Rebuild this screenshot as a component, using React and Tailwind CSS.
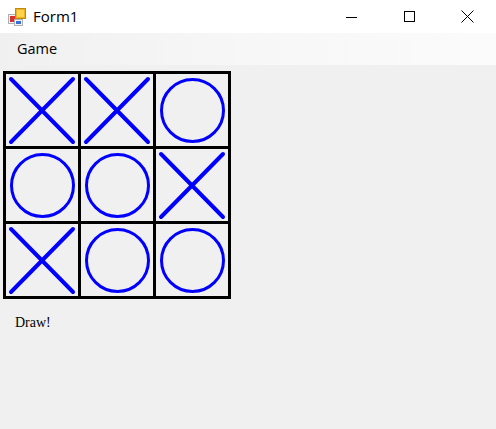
// App.jsx — WinForms-style tic-tac-toe window (draw state)

const board = ['X', 'X', 'O', 'O', 'O', 'X', 'X', 'O', 'O']

function Mark({ v }) {
  if (v === 'X') {
    return (
      <svg width="72" height="72" viewBox="0 0 72 72">
        <line x1="5" y1="5" x2="67" y2="68" stroke="#0000ff" strokeWidth="4" strokeLinecap="round" />
        <line x1="67" y1="5" x2="5" y2="68" stroke="#0000ff" strokeWidth="4" strokeLinecap="round" />
      </svg>
    )
  }
  return (
    <svg width="72" height="72" viewBox="0 0 72 72">
      <circle cx="36.5" cy="36.5" r="31" fill="none" stroke="#0000ff" strokeWidth="3" />
    </svg>
  )
}

function AppIcon() {
  return (
    <svg width="18" height="18" viewBox="0 0 18 18">
      <rect x="0.5" y="6.5" width="8" height="9" fill="#f4f4f4" stroke="#b0b0b0" />
      <rect x="2" y="8" width="5" height="6" fill="#d83030" />
      <rect x="7.5" y="0.5" width="10" height="10" fill="#f0b020" stroke="#c08a10" />
      <rect x="9" y="2" width="7" height="7" fill="#fcd44a" />
      <rect x="6.5" y="11.5" width="8" height="6" fill="#f4f4f4" stroke="#b0b0b0" />
      <rect x="8" y="13" width="5" height="3" fill="#3a6fd8" />
    </svg>
  )
}

export default function App() {
  return (
    <div className="w-[496px] h-[429px] bg-[#f0f0f0] flex flex-col overflow-hidden" style={{ fontFamily: '"Open Sans", "Noto Sans", sans-serif' }}>

      {/* Title bar */}
      <div className="h-[33px] bg-white flex items-center shrink-0">
        <div className="pl-[8px] pr-[7px] flex items-center"><AppIcon /></div>
        <span className="text-[15px] text-black leading-none">Form1</span>
        <div className="ml-auto flex h-full">
          <div className="w-[58px] flex items-center justify-center">
            <div className="w-[11px] h-px bg-black mt-[2px]" />
          </div>
          <div className="w-[58px] flex items-center justify-center">
            <div className="w-[11px] h-[11px] border border-black" />
          </div>
          <div className="w-[58px] flex items-center justify-center">
            <svg width="13" height="13" viewBox="0 0 13 13">
              <path d="M0.5 0.5 L12.5 12.5 M12.5 0.5 L0.5 12.5" stroke="#000" strokeWidth="1" />
            </svg>
          </div>
        </div>
      </div>

      {/* Menu strip */}
      <div className="h-[32px] bg-gradient-to-r from-[#f0f0f0] via-[#f7f7f7] to-[#fbfbfb] flex items-center shrink-0">
        <span className="ml-[17px] text-[14.5px] text-black leading-none">Game</span>
      </div>

      {/* Board */}
      <div className="pl-[3px] pt-[6px]">
        <div className="w-[228px] bg-black p-[3px] grid grid-cols-3 gap-[3px]">
          {board.map((v, i) => (
            <div key={i} className="w-[72px] h-[72px] bg-[#f0f0f0]">
              <Mark v={v} />
            </div>
          ))}
        </div>
      </div>

      <div className="pl-[15px] pt-[17px] text-[14px] text-black leading-none" style={{ fontFamily: '"Liberation Serif", serif' }}>
        Draw!
      </div>
    </div>
  )
}
